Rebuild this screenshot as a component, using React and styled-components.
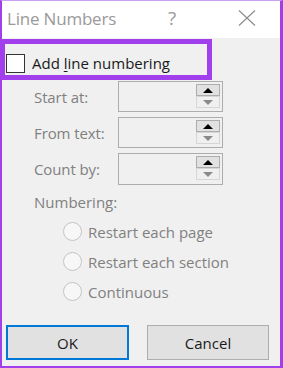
import React from "react";
import styled, { createGlobalStyle } from "styled-components";

const Global = createGlobalStyle`
  html, body { margin: 0; padding: 0; background: #fff; }
  body { font-family: "Open Sans", "Noto Sans", sans-serif; }
`;

const PURPLE = "#a23fec";

const Frame = styled.div`
  position: relative;
  box-sizing: border-box;
  width: 283px;
  height: 368px;
  border-top: 1px solid #c9a0f2;
  border-left: 2px solid ${PURPLE};
  border-right: 3px solid ${PURPLE};
  border-bottom: 2px solid ${PURPLE};
  display: flex;
  flex-direction: column;
  overflow: hidden;
`;

const TitleBar = styled.div`
  height: 37px;
  background: #fff;
  display: flex;
  align-items: center;
  padding-left: 5px;
  flex-shrink: 0;
`;

const Title = styled.div`
  font-size: 17px;
  color: #9a9a9a;
  letter-spacing: -0.2px;
  flex: 1;
  margin-top: -2px;
`;

const Help = styled.div`
  font-size: 19px;
  color: #9a9a9a;
  width: 20px;
  margin-right: 50px;
  margin-top: -4px;
`;

const Close = styled.svg`
  width: 18px;
  height: 16px;
  margin-right: 24px;
  margin-top: -3px;
`;

const Body = styled.div`
  flex: 1;
  background: #f0f0f0;
  display: flex;
  flex-direction: column;
`;

const CheckRow = styled.label`
  display: flex;
  align-items: center;
  height: 18px;
  margin-top: 16px;
  padding-left: 4px;
  gap: 7px;
  font-size: 15px;
  color: #1a1a1a;
`;

const Box = styled.span`
  box-sizing: border-box;
  width: 19px;
  height: 19px;
  border: 1px solid #333;
  background: #fff;
`;

const Under = styled.span`
  text-decoration: underline;
  text-underline-offset: 2px;
`;

const Highlight = styled.div`
  position: absolute;
  left: -2px;
  top: 38px;
  width: 212px;
  height: 41px;
  box-sizing: border-box;
  border: 5px solid ${PURPLE};
  pointer-events: none;
`;

const Fields = styled.div`
  display: flex;
  flex-direction: column;
  gap: 5px;
  margin-top: 9px;
  padding-left: 32px;
`;

const FieldRow = styled.div`
  display: grid;
  grid-template-columns: 84px 105px;
  align-items: center;
`;

const Label = styled.span`
  font-size: 15px;
  color: #808080;
  letter-spacing: -0.1px;
`;

const Input = styled.div`
  box-sizing: border-box;
  height: ${(p) => p.$h}px;
  border: 1px solid #adadad;
  background: #f0f0f0;
  display: flex;
  justify-content: flex-end;
  padding: 2px 2px 0 0;
`;

const Spin = styled.div`
  display: flex;
  flex-direction: column;
  width: 24px;
`;

const SpinBtn = styled.div`
  box-sizing: border-box;
  height: 12px;
  display: flex;
  align-items: center;
  justify-content: center;
  border: 1px solid ${(p) => (p.$active ? "#adadad" : "#d6d6d6")};
  background: ${(p) => (p.$active ? "#e1e1e1" : "#f0f0f0")};
`;

const Arrow = styled.span`
  width: 0;
  height: 0;
  border-left: 5px solid transparent;
  border-right: 5px solid transparent;
  ${(p) =>
    p.$up
      ? `border-bottom: 5px solid #000;`
      : `border-top: 5px solid #8a8a8a;`}
`;

const GroupLabel = styled.div`
  font-size: 15px;
  color: #808080;
  margin-top: 7px;
  padding-left: 32px;
`;

const Radios = styled.div`
  display: flex;
  flex-direction: column;
  gap: 11px;
  padding-left: 61px;
  margin-top: 10px;
`;

const RadioRow = styled.div`
  display: flex;
  align-items: center;
  gap: 6px;
  height: 19px;
  font-size: 15px;
  color: #808080;
`;

const Circle = styled.span`
  box-sizing: border-box;
  width: 19px;
  height: 19px;
  border-radius: 50%;
  border: 1px solid #c4c4c4;
  background: #f7f7f7;
`;

const Buttons = styled.div`
  display: flex;
  gap: 18px;
  padding-left: 4px;
  margin-top: 24px;
`;

const Button = styled.div`
  box-sizing: border-box;
  width: ${(p) => p.$w}px;
  height: 35px;
  display: flex;
  align-items: center;
  justify-content: center;
  background: #e1e1e1;
  border: ${(p) => (p.$primary ? "2px solid #0078d7" : "1px solid #adadad")};
  font-size: 15px;
  color: #1a1a1a;
`;

function Spinner({ h }) {
  return (
    <Input $h={h}>
      <Spin>
        <SpinBtn $active>
          <Arrow $up />
        </SpinBtn>
        <SpinBtn>
          <Arrow />
        </SpinBtn>
      </Spin>
    </Input>
  );
}

export default function App() {
  return (
    <>
      <Global />
      <Frame>
        <TitleBar>
          <Title>Line Numbers</Title>
          <Help>?</Help>
          <Close viewBox="0 0 18 16">
            <path d="M1 0.5 L17 15.5 M17 0.5 L1 15.5" stroke="#8a8a8a" strokeWidth="1.1" fill="none" />
          </Close>
        </TitleBar>
        <Body>
          <CheckRow>
            <Box />
            <span>
              Add <Under>l</Under>ine numbering
            </span>
          </CheckRow>
          <Fields>
            <FieldRow>
              <Label>Start at:</Label>
              <Spinner h={31} />
            </FieldRow>
            <FieldRow>
              <Label>From text:</Label>
              <Spinner h={31} />
            </FieldRow>
            <FieldRow>
              <Label>Count by:</Label>
              <Spinner h={32} />
            </FieldRow>
          </Fields>
          <GroupLabel>Numbering:</GroupLabel>
          <Radios>
            <RadioRow>
              <Circle />
              Restart each page
            </RadioRow>
            <RadioRow>
              <Circle />
              Restart each section
            </RadioRow>
            <RadioRow>
              <Circle />
              Continuous
            </RadioRow>
          </Radios>
          <Buttons>
            <Button $primary $w={123}>OK</Button>
            <Button $w={122}>Cancel</Button>
          </Buttons>
        </Body>
        <Highlight />
      </Frame>
    </>
  );
}
